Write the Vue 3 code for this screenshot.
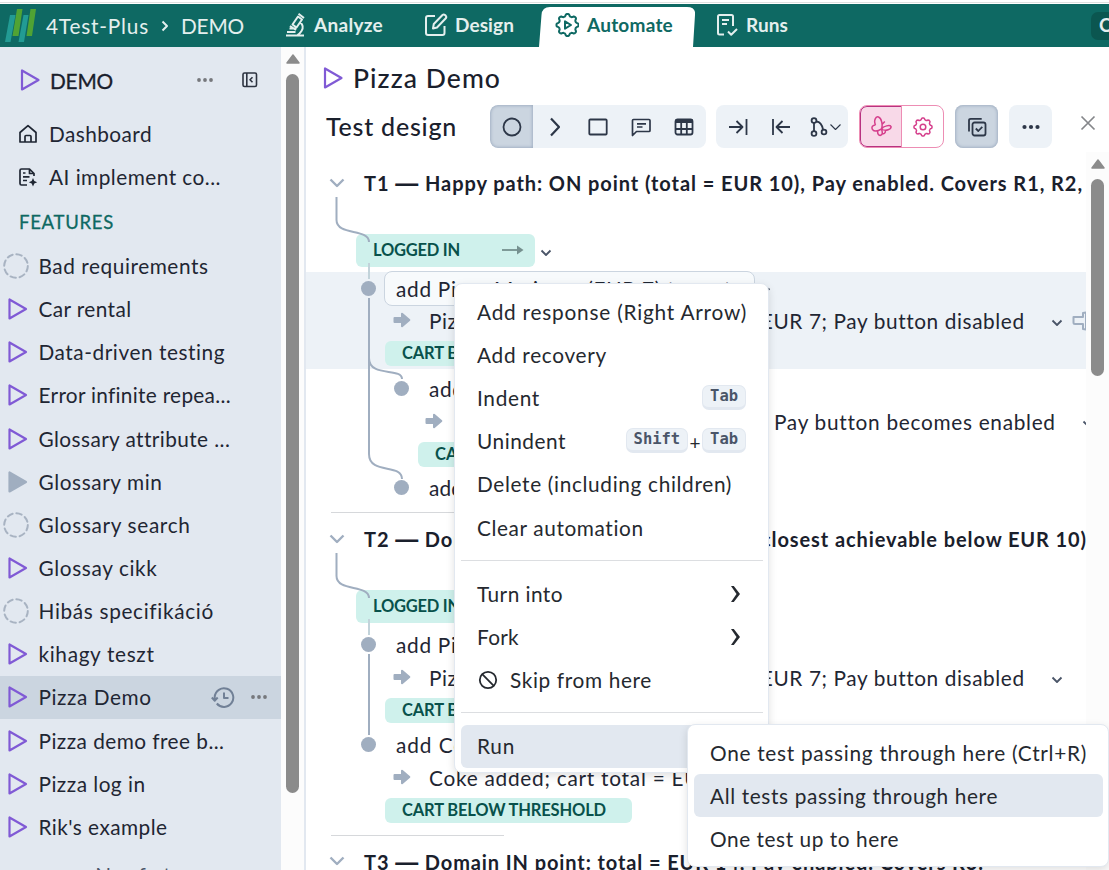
<template>
  <div class="app">
    <header class="topbar">
      <svg class="logo" width="32" height="34" viewBox="0 0 32 34">
        <path d="M5 6h5.500L5.500 33H0z M18.500 6h5l-4.500 27h-5.500z" fill="#229b94" />
        <path d="M12 0h5.500l-4 27H7.500z M25.500 0h5.500l-4 27h-5.500z" fill="#50a334" />
      </svg>
      <span class="crumb" v-fit="103">4Test-Plus</span>
      <svg class="crumb-sep" width="8" height="12" viewBox="0 0 8 12"><path d="M1.500 1.500 6 6l-4.500 4.500" /></svg>
      <span class="crumb" v-fit="63">DEMO</span>

      <nav class="tabs">
        <a v-for="tab in tabs" :key="tab.label" class="tab" :class="{ active: tab.active }">
          <svg v-if="tab.active" class="tab-shape" width="156" height="40" viewBox="0 0 156 40">
            <path d="M0 40 2.500 8Q3 0 11 0H148Q157 0 156 8L154 40z" fill="#fff" />
          </svg>
          <svg class="tab-icon" width="24" height="24" viewBox="0 0 24 24" v-html="tab.icon" />
          <span class="tab-label" v-fit="tab.w">{{ tab.label }}</span>
        </a>
      </nav>
      <div class="top-button">Create</div>
    </header>

    <div class="body">
      <aside class="sidebar">
        <div class="project">
          <svg class="play" width="22" height="26" viewBox="0 0 22 26"><path d="M3 3.500v19L19.500 13z" /></svg>
          <span class="project-name" v-fit="63">DEMO</span>
          <svg class="dots" width="18" height="6" viewBox="0 0 18 6"><circle cx="3" cy="3" r="1.900" /><circle cx="9" cy="3" r="1.900" /><circle cx="15" cy="3" r="1.900" /></svg>
          <svg class="collapse" width="16" height="16" viewBox="0 0 16 16">
            <rect x="1" y="1" width="13.500" height="13.500" rx="1.500" /><path d="M4.800 1v13.500M10.500 5.300 8 7.800l2.500 2.500" />
          </svg>
        </div>

        <div class="link">
          <svg class="link-icon" width="20" height="20" viewBox="0 0 20 20">
            <path d="M2 8.500 10 1.700l8 6.800V18H2zM7 18v-5.500q0-1 1-1h4q1 0 1 1V18" />
          </svg>
          <span v-fit="103">Dashboard</span>
        </div>
        <div class="link">
          <svg class="link-icon" width="20" height="20" viewBox="0 0 20 20">
            <path d="M9 18H3.500Q2 18 2 16.500v-13Q2 2 3.500 2h8L16 6.500V9M11.500 2v4.500H16M5 6h2.500M5 9.800h6.500M5 13.500h4" />
            <path class="solid" d="M15 11l1.300 2.900L19.200 15.200l-2.900 1.300L15 19.400l-1.300-2.900-2.900-1.300 2.900-1.300z" />
          </svg>
          <span v-fit="172">AI implement co...</span>
        </div>

        <div class="section"><span v-fit="95">FEATURES</span></div>

        <div v-for="item in features" :key="item.name" class="feature" :class="{ selected: item.selected }">
          <svg v-if="item.state === 'empty'" class="circle" width="26" height="26" viewBox="0 0 26 26"><circle cx="13" cy="13" r="11.800" /></svg>
          <svg v-else class="play" :class="item.state" width="26" height="26" viewBox="0 0 26 26"><path d="M6.500 3.500v19L23 13z" /></svg>
          <span class="feature-name" v-fit="item.w">{{ item.name }}</span>
          <template v-if="item.selected">
            <svg class="history" width="24" height="24" viewBox="0 0 24 24">
              <path d="M5.800 18.500A9.300 9.300 0 1 0 3.700 12v2.500M.8 12.500l3 3.200 2.900-3.200M13 7.500V13h4.500" />
            </svg>
            <svg class="dots row-dots" width="18" height="6" viewBox="0 0 18 6"><circle cx="3" cy="3" r="1.900" /><circle cx="9" cy="3" r="1.900" /><circle cx="15" cy="3" r="1.900" /></svg>
          </template>
        </div>
        <div class="new-feature"><span v-fit="116">+ New feature</span></div>
      </aside>

      <div class="scrollbar side-scroll">
        <svg width="14" height="10" viewBox="0 0 14 10"><path d="M7 1 13 9H1z" /></svg>
        <div class="thumb" />
      </div>

      <main class="main">
        <div class="title">
          <svg class="play" width="22" height="26" viewBox="0 0 22 26"><path d="M3 3.500v19L19.500 13z" /></svg>
          <h1 v-fit="148">Pizza Demo</h1>
        </div>

        <div class="toolbar">
          <h2><span v-fit="131">Test design</span></h2>
          <div class="group nodes">
            <button v-for="(icon, i) in nodeIcons" :key="i" :class="{ pressed: i === 0 }">
              <svg width="22" height="22" viewBox="0 0 22 22" v-html="icon" />
            </button>
          </div>
          <div class="group moves">
            <button><svg width="22" height="22" viewBox="0 0 22 22"><path d="M2 11h13M9.500 5l6 6-6 6M19.500 3v16" /></svg></button>
            <button><svg width="22" height="22" viewBox="0 0 22 22"><path d="M20 11H7M12.500 5l-6 6 6 6M3 3v16" /></svg></button>
            <button class="wide">
              <svg width="32" height="22" viewBox="0 0 32 22">
                <circle cx="5" cy="4.500" r="2.400" /><circle cx="5" cy="17.500" r="2.400" /><circle cx="15" cy="16" r="2.400" />
                <path d="M5 7v8M7.500 5.500q5 .5 6.500 8" /><path d="M21.500 8.500l5 5 5-5" stroke-width="1.100" />
              </svg>
            </button>
          </div>
          <div class="group butterfly">
            <button class="on">
              <svg width="22" height="22" viewBox="0 0 22 22">
                <path d="M11.500 13C13 9 11.500 2 8.500 1S3.500 5 5.500 9M5.500 9C3 9 1 11 2.500 13.500 4.500 16 9 14.500 11.500 13M11.500 13C13.500 10 20 8.500 21 10.500 21.500 13 16 16 11.500 13M8 14.500C7 17 8.500 19.800 10.700 19.300c2.200-.5 1.800-3.300.8-6.300M12.200 17.500q3 1 3.300-2.800M12 8.500l2.800-3" />
              </svg>
            </button>
            <button><svg width="22" height="22" viewBox="0 0 22 22"><path :d="gear(11, 11, 9, 7.300)" /><circle cx="11" cy="11" r="2.800" /></svg></button>
          </div>
          <div class="group single pressed">
            <button>
              <svg width="22" height="22" viewBox="0 0 22 22"><rect x="6.500" y="6.500" width="13" height="13" rx="2" /><path d="M3 15.500V4.500Q3 2.800 4.700 2.800h11M9.800 12.500l2.500 2.500 4-4.200" /></svg>
            </button>
          </div>
          <div class="group single">
            <button><svg class="more" width="22" height="22" viewBox="0 0 22 22"><circle cx="4.500" cy="11" r="2.100" /><circle cx="11" cy="11" r="2.100" /><circle cx="17.500" cy="11" r="2.100" /></svg></button>
          </div>
          <svg class="close" width="16" height="16" viewBox="0 0 16 16"><path d="M1.500 1.500l13 13M14.500 1.500l-13 13" /></svg>
        </div>

        <div class="design">
          <div class="tree">
            <section v-for="test in tests" :key="test.id" class="test">
              <svg class="links" width="120" height="360" viewBox="0 0 120 360">
                <path v-for="(d, i) in test.links" :key="i" :d="d" />
                <path v-if="test.links.length" class="faint" d="M63 102v16" />
              </svg>
              <div class="test-head">
                <svg width="16" height="10" viewBox="0 0 16 10"><path d="M1.500 1.500 8 8l6.500-6.500" /></svg>
                <span v-fit="test.w">{{ test.id }} <i class="dash">—</i> {{ test.title }}</span>
              </div>
              <div v-if="test.rows.length" class="entry">
                <div class="state entry-state">
                  <span v-fit="87">LOGGED IN</span>
                  <svg width="22" height="10" viewBox="0 0 22 10"><path d="M0 5h16" /><path d="M15 .5 21.500 5 15 9.500z" /></svg>
                </div>
                <svg class="caret" width="12" height="8" viewBox="0 0 12 8"><path d="M1.500 1.500 6 6l4.500-4.500" /></svg>
              </div>
              <div
                v-for="(row, r) in test.rows"
                :key="r"
                class="row"
                :class="[row.kind, { deep: row.deep, marked: row.marked }]"
              >
                <i v-if="row.kind === 'step'" class="dot" />
                <svg v-if="row.kind === 'result'" class="result-arrow" width="18" height="16" viewBox="0 0 18 16">
                  <path d="M1.500 5H8V1.500Q8.500.3 9.700 1L17 7.300q.8.700 0 1.400L9.700 15Q8.500 15.700 8 14.500V11H1.500Q.5 11 .5 10V6q0-1 1-1z" />
                </svg>
                <div class="cell" :class="{ state: row.kind === 'cart', editing: row.editing }">
                  <span v-fit="row.w">{{ row.text }}</span>
                  <span v-if="row.tail" class="tail" v-fit="row.tailW">{{ row.tail }}</span>
                </div>
                <svg v-if="row.kind !== 'cart'" class="caret" width="12" height="8" viewBox="0 0 12 8"><path d="M1.500 1.500 6 6l4.500-4.500" /></svg>
                <svg v-if="row.marked && row.kind === 'result'" class="pin" width="22" height="20" viewBox="0 0 22 20"><path d="M1.500 6H11V2l3-.5v17l-3-.5v-5H3q-1.500 0-1.500-1.500z" /></svg>
              </div>
              <hr v-if="test.rows.length" />
            </section>
          </div>
          <div class="scrollbar tree-scroll">
            <svg width="14" height="10" viewBox="0 0 14 10"><path d="M7 1 13 9H1z" /></svg>
            <div class="thumb" />
          </div>
        </div>
      </main>
    </div>

    <div class="menu context-menu">
      <template v-for="(item, i) in menu" :key="i">
        <div v-if="item.separator" class="separator" />
        <div v-else class="menu-item" :class="{ hover: item.hover }">
          <svg v-if="item.skip" class="skip" width="20" height="20" viewBox="0 0 20 20"><circle cx="10" cy="10" r="8.200" /><path d="M4.200 4.200l11.600 11.600" /></svg>
          <span v-fit="item.w">{{ item.label }}</span>
          <span v-if="item.keys" class="keys">
            <template v-for="(key, k) in item.keys" :key="key"><b v-if="k > 0">+</b><kbd v-fit="key.length * 9.300">{{ key }}</kbd></template>
          </span>
          <svg v-if="item.sub" class="sub-arrow" width="11" height="18" viewBox="0 0 11 18"><path d="M1 1h2.800L10 9l-6.200 8H1l5.500-8z" /></svg>
        </div>
      </template>
    </div>

    <div class="menu run-menu">
      <div v-for="item in runMenu" :key="item.label" class="menu-item" :class="{ hover: item.hover }">
        <span v-fit="item.w">{{ item.label }}</span>
      </div>
    </div>
  </div>
</template>

<script setup>
// spreads the letters of a label over the given width
const vFit = {
  mounted(el, { value }) {
    if (!value) return;
    const style = getComputedStyle(el);
    const extra = ['paddingLeft', 'paddingRight', 'borderLeftWidth', 'borderRightWidth']
      .reduce((sum, key) => sum + (parseFloat(style[key]) || 0), 0);
    const natural = el.getBoundingClientRect().width - extra;
    el.style.letterSpacing = `${(value - natural) / el.textContent.length}px`;
  }
};

const gear = (cx, cy, outer, inner) => {
  const points = [];
  for (let i = 0; i < 80; i++) {
    const a = (i / 80) * Math.PI * 2;
    const wave = Math.max(-1, Math.min(1, Math.cos(a * 8) * 1.8));
    const r = (outer + inner) / 2 + (wave * (outer - inner)) / 2;
    points.push(`${(cx + r * Math.sin(a)).toFixed(2)} ${(cy - r * Math.cos(a)).toFixed(2)}`);
  }
  return `M${points.join('L')}z`;
};

const tabs = [
  {
    label: 'Analyze', w: 69,
    icon: '<path d="M3 22.500h18M4 19h8.500M6.500 15.500h7M9.500 11.500l5.500-8 4 3-5.500 8zM15.500.8l5.500 4.200M17.500 9.500q4 4 1 8.500-1.500 2.500-4 4M7 13l6 4"/>'
  },
  {
    label: 'Design', w: 59,
    icon: '<path d="M11 3H4Q2 3 2 5v15q0 2 2 2h14.500q2 0 2-2v-7M9 15.500l.8-4.500L18.500 2q1.200-1 2.500 0l.8.800q1 1.200 0 2.500l-8.800 9.200z"/>'
  },
  {
    label: 'Automate', w: 86, active: true,
    icon: `<path d="${gear(12.5, 12, 11, 8.8)}"/><path d="M10 8.300v7.400l6-3.700z"/>`
  },
  {
    label: 'Runs', w: 42,
    icon: '<path d="M9 21.500H4.500q-1.500 0-1.500-1.500V3.500Q3 2 4.500 2h12Q18 2 18 3.500V13M7 7h7M7 11h5M13 18.500l3.200 3.200 5.800-5.700"/>'
  }
];

const features = [
  { name: 'Bad requirements', w: 170, state: 'empty' },
  { name: 'Car rental', w: 93 },
  { name: 'Data-driven testing', w: 187 },
  { name: 'Error infinite repea...', w: 192 },
  { name: 'Glossary attribute ...', w: 191 },
  { name: 'Glossary min', w: 124, state: 'stopped' },
  { name: 'Glossary search', w: 152, state: 'empty' },
  { name: 'Glossay cikk', w: 119 },
  { name: 'Hibás specifikáció', w: 175, state: 'empty' },
  { name: 'kihagy teszt', w: 116 },
  { name: 'Pizza Demo', w: 113, selected: true },
  { name: 'Pizza demo free b...', w: 186 },
  { name: 'Pizza log in', w: 107 },
  { name: "Rik's example", w: 129 }
];

const nodeIcons = [
  '<circle cx="11" cy="11" r="8.500"/>',
  '<path d="M7 2.500 15 11l-8 8.500" stroke-width="2.200"/>',
  '<rect x="2.300" y="3.500" width="17.400" height="15" rx="1"/>',
  '<path d="M2.500 19.500V4.500Q2.500 3.500 3.500 3.500h15.500q1 0 1 1v10q0 1-1 1H6.500zM7 7.800h9M7 11h5.500" stroke-width="1.700"/>',
  '<rect x="2.500" y="3.500" width="17" height="15" rx="2"/><path d="M2.500 5h17" stroke-width="4"/><path d="M2.500 13h17M8.200 6v12.500M13.800 6v12.500"/>'
];

// connector paths are relative to the top left corner of a test block
const entryLink = 'M30.500 36V59C30.500 75 63 67 63 81';

const tests = [
  {
    id: 'T1',
    title: 'Happy path: ON point (total = EUR 10), Pay enabled. Covers R1, R2,',
    w: 719,
    links: [entryLink, 'M63 137V293C63 314 96 302 96 318', 'M63 197C63 217 96 206 96 218'],
    rows: [
      { kind: 'step', text: 'add Pizza Marinara (EUR 7) to cart', w: 336, marked: true, editing: true },
      { kind: 'result', text: 'Pizza Marinara added; cart total = EUR 7; Pay button disabled', w: 595, marked: true },
      { kind: 'cart', text: 'CART BELOW THRESHOLD', w: 204, marked: true },
      { kind: 'step', text: 'add Coke (EUR 3) to cart', deep: true, w: 240 },
      { kind: 'result', text: 'Coke added; cart total = EUR 10;', deep: true, w: 307, tail: 'Pay button becomes enabled', tailW: 281 },
      { kind: 'cart', text: 'CART AT THRESHOLD', deep: true, w: 170 },
      { kind: 'step', text: 'add Coke again', deep: true, w: 140 }
    ]
  },
  {
    id: 'T2',
    title: 'Domain OUT point: total = EUR 9 (closest achievable below EUR 10)',
    w: 723,
    links: [entryLink, 'M63 137V218'],
    rows: [
      { kind: 'step', text: 'add Pizza Marinara (EUR 7) to cart', w: 336 },
      { kind: 'result', text: 'Pizza Marinara added; cart total = EUR 7; Pay button disabled', w: 595 },
      { kind: 'cart', text: 'CART BELOW THRESHOLD', w: 204 },
      { kind: 'step', text: 'add Coke (EUR 2) to cart', w: 247 },
      { kind: 'result', text: 'Coke added; cart total = EUR 9', w: 304 },
      { kind: 'cart', text: 'CART BELOW THRESHOLD', w: 204 }
    ]
  },
  {
    id: 'T3',
    title: 'Domain IN point: total = EUR 14, Pay enabled. Covers R3.',
    w: 620,
    links: [],
    rows: []
  }
];

const menu = [
  { label: 'Add response (Right Arrow)', w: 270 },
  { label: 'Add recovery', w: 130 },
  { label: 'Indent', w: 63, keys: ['Tab'] },
  { label: 'Unindent', w: 89, keys: ['Shift', 'Tab'] },
  { label: 'Delete (including children)', w: 255 },
  { label: 'Clear automation', w: 167 },
  { separator: true },
  { label: 'Turn into', w: 86, sub: true },
  { label: 'Fork', w: 42, sub: true },
  { label: 'Skip from here', w: 142, skip: true },
  { separator: true },
  { label: 'Run', w: 38, hover: true }
];

const runMenu = [
  { label: 'One test passing through here (Ctrl+R)', w: 377 },
  { label: 'All tests passing through here', w: 288, hover: true },
  { label: 'One test up to here', w: 189 }
];
</script>

<style>
body {
  background: #fff;
  overflow: hidden;
}
</style>

<style scoped>
.app {
  position: relative;
  display: flex;
  flex-direction: column;
  box-sizing: border-box;
  width: 1109px;
  height: 870px;
  padding-top: 4px;
  overflow: hidden;
  font-family: Lato, "Open Sans", sans-serif;
  font-size: 20.8px;
  color: #1f2633;
  white-space: nowrap;
  background: linear-gradient(#fff 2px, #dfe1e0 2px, #dfe1e0 3px, #fff 3px);
}

.app :deep(svg) {
  flex: none;
  display: block;
  fill: none;
  stroke: currentColor;
  stroke-width: 2;
  stroke-linejoin: round;
}

.app span {
  display: inline-block;
}

/* top bar */
.topbar {
  flex: none;
  display: flex;
  align-items: center;
  height: 43px;
  padding-left: 5px;
  background: #0e6963;
  color: #e4efee;
}

.app .logo {
  stroke: none;
  margin-right: 9px;
}

.crumb-sep {
  margin: 0 12px;
}

.tabs {
  display: flex;
  height: 100%;
  margin-left: 23px;
}

.tab {
  position: relative;
  display: flex;
  align-items: center;
  gap: 7px;
  height: 40px;
  padding: 0 16px;
  margin-right: 9px;
  font-weight: bold;
  font-size: 19px;
}

.tab.active {
  gap: 8px;
  padding-right: 22px;
  margin-right: 4px;
  color: #0e6963;
}

.app .tab-shape {
  position: absolute;
  left: 0;
  top: 3px;
  stroke: none;
}

.tab-icon,
.tab-label {
  position: relative;
}

.tab-icon {
  margin-top: 2px;
}

.top-button {
  width: 60px;
  height: 28px;
  margin-left: auto;
  margin-right: -42px;
  padding-left: 8px;
  box-sizing: border-box;
  border-radius: 7px;
  background: #0b5650;
  font-weight: bold;
  font-size: 19px;
  line-height: 26px;
}

.body {
  flex: 1;
  min-height: 0;
  display: flex;
}

/* sidebar */
.sidebar {
  flex: none;
  width: 281px;
  overflow: hidden;
  background: #e2e8f0;
}

.app .play {
  stroke: #805ad5;
  stroke-width: 2.2;
}

.app .play.stopped {
  fill: #a0aec0;
  stroke: #a0aec0;
}

.app .dots {
  fill: #76787c;
  stroke: none;
}

.project {
  display: flex;
  align-items: center;
  height: 66px;
  padding-left: 19px;
}

.project-name {
  margin: 0 83px 0 9px;
  color: #1a202c;
  -webkit-text-stroke: 0.3px;
}

.collapse {
  margin-left: 28px;
  color: #2d3340;
}

.app .collapse {
  stroke-width: 1.6;
}

.link {
  position: relative;
  top: -1px;
  display: flex;
  align-items: center;
  height: 43px;
  padding-left: 18px;
  gap: 11px;
}

.app .link-icon {
  stroke-width: 1.7;
}

.solid {
  fill: currentColor;
  stroke: none;
}

.section {
  height: 45.500px;
  padding-left: 19px;
  color: #0e6963;
  font-size: 18.5px;
  line-height: 47px;
  -webkit-text-stroke: 0.3px;
}

.feature {
  display: flex;
  align-items: center;
  height: 43.15px;
  padding-left: 3px;
}

.feature.selected {
  background: #cbd5e0;
}

.feature-name {
  margin: -1px 0 0 9.500px;
}

.app .circle {
  stroke: #a8b3c2;
  stroke-dasharray: 5.5 3.77;
  stroke-linecap: round;
}

.app .history {
  margin-left: auto;
  stroke: #718096;
}

.row-dots {
  margin: 0 13px 0 15px;
}

.new-feature {
  padding: 14px 0 0 80px;
  color: #4a5568;
}

/* scrollbars */
.scrollbar {
  flex: none;
  box-sizing: border-box;
  display: flex;
  flex-direction: column;
  align-items: center;
  background: #fcfcfc;
}

.app .scrollbar svg {
  fill: #8b8b8b;
  stroke: #8b8b8b;
  stroke-width: 1.5;
}

.thumb {
  width: 13px;
  border-radius: 7px;
  background: #8b8b8b;
}

.side-scroll {
  width: 25px;
  padding-top: 7px;
  border-right: 2px solid #e2e8f0;
}

.side-scroll .thumb {
  height: 719px;
  margin-top: 10px;
}

.tree-scroll {
  width: 23px;
  padding-top: 7px;
}

.tree-scroll .thumb {
  height: 197px;
  margin-top: 10px;
}

/* main */
.main {
  flex: 1;
  min-width: 0;
  display: flex;
  flex-direction: column;
}

.title {
  display: flex;
  align-items: center;
  height: 55px;
  padding: 3px 0 0 16px;
}

.title h1,
.toolbar h2 {
  margin: 0;
  font-weight: 500;
  font-size: 26.5px;
  line-height: 30px;
  color: #1a202c;
}

.title h1 {
  margin: 1px 0 0 9px;
}

.toolbar h2 {
  width: 131px;
  margin: -1px 33px 0 20px;
  font-size: 25px;
}

.toolbar {
  display: flex;
  align-items: center;
  height: 43px;
}

.group {
  box-sizing: border-box;
  display: flex;
  height: 43px;
  margin-right: 11px;
  border-radius: 8px;
  overflow: hidden;
  background: #edf2f7;
  color: #2d3748;
}

.app .group svg {
  stroke-width: 1.8;
}

.group button {
  flex: 1;
  display: flex;
  align-items: center;
  justify-content: center;
  padding: 0;
  border: 0;
  background: none;
  color: inherit;
}

.nodes {
  width: 216px;
  margin-right: 10px;
}

.moves {
  width: 132px;
}

.moves .wide {
  flex: none;
  width: 46px;
}

.group .pressed,
.group.pressed {
  background: #cbd5e0;
  box-shadow: inset 0 0 3px 1px #a3b1c4;
}

.nodes .pressed {
  border-radius: 8px 0 0 8px;
}

.butterfly {
  width: 85px;
  border: 1px solid #ed8db4;
  background: #fff;
  color: #d53f8c;
}

.app .butterfly svg {
  stroke-width: 1.5;
}

.butterfly .on {
  background: #f8d9e8;
  border-right: 1px solid #ed8db4;
  border-radius: 7px 0 0 7px;
  box-shadow: inset 1px 0 0 #b83280, inset 0 1px 0 #b83280, inset 0 -1px 0 #b83280;
}

.single {
  width: 43px;
}

.app .group .more {
  fill: currentColor;
  stroke: none;
}

.app .close {
  margin: -8px 0 0 17px;
  stroke: #85878b;
  stroke-width: 1.7;
}

.design {
  flex: 1;
  min-height: 0;
  display: flex;
  padding-top: 4px;
}

.tree {
  flex: 1;
  min-width: 0;
  overflow: hidden;
  padding-top: 9px;
}

.test {
  position: relative;
}

.app .links {
  position: absolute;
  left: 0;
  top: 0;
  stroke: #a0aec0;
  z-index: 1;
}

.links .faint {
  stroke: #c2d3da;
}

.test-head {
  display: flex;
  align-items: center;
  height: 44px;
  padding-left: 23px;
  font-weight: bold;
  font-size: 20px;
  color: #1a202c;
}

.test-head svg {
  margin: -1px 19px 0 0;
  color: #a0aec0;
}

.app .test-head svg {
  stroke-width: 2.4;
}

.dash {
  font: bold 23px/20px "Liberation Sans", sans-serif;
}

.entry {
  display: flex;
  align-items: center;
  padding: 29px 0 5px 50px;
}

.state {
  box-sizing: border-box;
  display: flex;
  align-items: center;
  height: 25px;
  padding: 0 16px 1px;
  border-radius: 6px;
  background: #cff1ec;
  color: #08514b;
  font-weight: bold;
  font-size: 16.5px;
}

.entry-state {
  width: 179px;
  height: 33px;
  padding: 0 11px 2px 17px;
  justify-content: space-between;
}

.app .entry-state svg {
  color: #75908f;
  fill: #75908f;
  stroke-width: 1.8;
}

.app .entry-state svg path:last-child {
  stroke: none;
}

.caret {
  margin: 5px 0 0 5px;
  color: #4a5568;
}

.app .caret {
  stroke-width: 1.8;
}

.row {
  display: flex;
  align-items: center;
  height: 33.2px;
  padding-left: 78px;
}

.row.marked {
  background: #edf2f7;
  height: 32.6px;
}

.row.cart.marked {
  height: 31.8px;
  margin-bottom: 2.600px;
}

.row.deep {
  padding-left: 111px;
}

.dot {
  position: relative;
  flex: none;
  width: 15px;
  height: 15px;
  margin: 0 20px 0 -23px;
  border-radius: 50%;
  background: #a0aec0;
}

.app .result-arrow {
  margin: -1px 18px 0 9px;
  fill: #a0aec0;
  stroke: none;
}

.deep .result-arrow {
  margin-left: 8px;
}

.cell.editing {
  box-sizing: border-box;
  width: 371px;
  height: 35px;
  margin: 0 0 0 -12px;
  padding-left: 11px;
  border: 1px solid #cbd5e0;
  border-radius: 8px;
  background: #f7fafc;
  line-height: 33px;
}

.editing + .caret {
  margin-left: 4px;
}

.tail {
  margin-left: 6px;
}

.cell {
  display: flex;
}

.result .caret {
  margin-left: 26px;
}

.cart .cell {
  margin-left: 1px;
  padding: 0 26px 1px 17px;
}

.app .pin {
  margin-left: 9px;
  stroke: #a0aec0;
}

hr {
  width: 173px;
  margin: 7.500px 0 4.200px 25px;
  border: 0;
  border-top: 1px solid #d6d8db;
}

/* menus */
.menu {
  position: absolute;
  box-sizing: border-box;
  padding: 6px 5px;
  border: 1px solid #e2e8f0;
  border-radius: 8px;
  background: #fff;
  box-shadow: 0 3px 8px rgba(0, 0, 0, 0.12);
  color: #25292f;
  z-index: 2;
}

.context-menu {
  left: 454px;
  top: 283px;
  width: 315px;
  height: 490px;
  padding-left: 6px;
}

.run-menu {
  left: 687px;
  top: 724px;
  width: 422px;
  height: 143px;
  padding-left: 6px;
  z-index: 3;
}

.menu-item {
  display: flex;
  align-items: center;
  height: 43.2px;
  padding: 0 17px 0 16px;
  border-radius: 6px;
}

.menu-item > span {
  margin-top: -1px;
}

.menu-item.hover {
  background: #e2e8f0;
}

.separator {
  height: 1px;
  margin: 10.500px 0 11.500px;
  background: #dcdee1;
}

.skip {
  margin: 0 12px 0 1px;
}

.app .skip {
  stroke-width: 1.8;
}

.app .sub-arrow {
  margin-left: auto;
  margin-right: 5px;
  fill: currentColor;
  stroke: none;
}

.keys {
  margin-left: auto;
}

.app .keys {
  display: flex;
  align-items: center;
}

.keys b {
  width: 14px;
  padding-top: 3px;
  text-align: center;
  font-weight: normal;
  font-size: 19px;
}

kbd {
  padding: 0 7px;
  height: 21px;
  border: 1px solid #e2e8f0;
  border-bottom-width: 3px;
  border-radius: 7px;
  background: #edf2f7;
  color: #4a5568;
  font: bold 15.5px/21px "DejaVu Sans Mono", monospace;
}
</style>
